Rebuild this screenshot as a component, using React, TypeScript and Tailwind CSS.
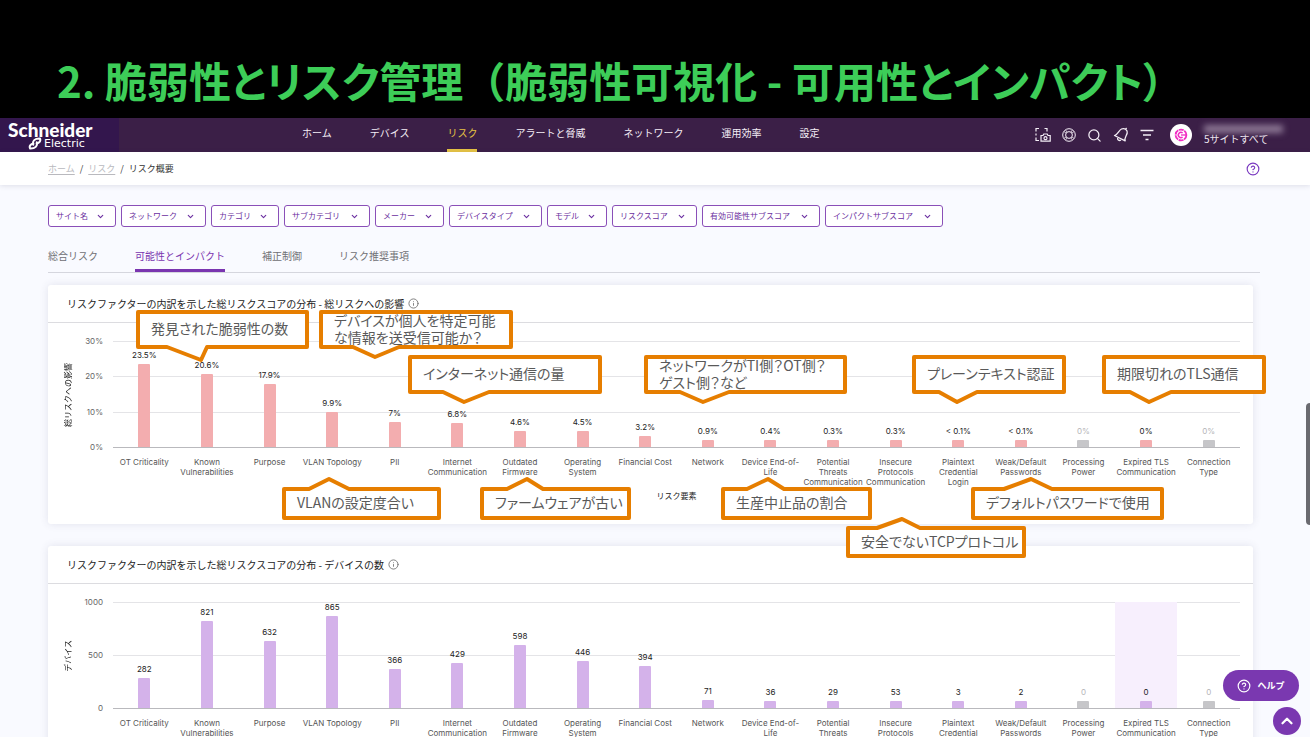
import { ChevronDown, ChevronUp, CircleHelp, Info, Search } from "lucide-react";

interface Factor {
  label: string;
  impact: number;
  impactLabel: string;
  devices: number;
  muted?: boolean;
  highlighted?: boolean;
}

interface CalloutProps {
  lines: string[];
  left: number;
  top: number;
  width: number;
  height: number;
  // tail points, relative to the box
  tail: { from: number; tip: number; to: number; reach: number; up?: boolean };
}

const NAV_ITEMS = ["ホーム", "デバイス", "リスク", "アラートと脅威", "ネットワーク", "運用効率", "設定"];

const FILTERS = [
  { label: "サイト名", width: "w-[68px]" },
  { label: "ネットワーク", width: "w-[85px]" },
  { label: "カテゴリ", width: "w-[68px]" },
  { label: "サブカテゴリ", width: "w-[86px]" },
  { label: "メーカー", width: "w-[69px]" },
  { label: "デバイスタイプ", width: "w-[93px]" },
  { label: "モデル", width: "w-[60px]" },
  { label: "リスクスコア", width: "w-[85px]" },
  { label: "有効可能性サブスコア", width: "w-[118px]" },
  { label: "インパクトサブスコア", width: "w-[118px]" },
];

const TABS = ["総合リスク", "可能性とインパクト", "補正制御", "リスク推奨事項"];

const FACTORS: Factor[] = [
  { label: "OT Criticality", impact: 23.5, impactLabel: "23.5%", devices: 282 },
  { label: "Known\nVulnerabilities", impact: 20.6, impactLabel: "20.6%", devices: 821 },
  { label: "Purpose", impact: 17.9, impactLabel: "17.9%", devices: 632 },
  { label: "VLAN Topology", impact: 9.9, impactLabel: "9.9%", devices: 865 },
  { label: "PII", impact: 7, impactLabel: "7%", devices: 366 },
  { label: "Internet\nCommunication", impact: 6.8, impactLabel: "6.8%", devices: 429 },
  { label: "Outdated\nFirmware", impact: 4.6, impactLabel: "4.6%", devices: 598 },
  { label: "Operating\nSystem", impact: 4.5, impactLabel: "4.5%", devices: 446 },
  { label: "Financial Cost", impact: 3.2, impactLabel: "3.2%", devices: 394 },
  { label: "Network", impact: 0.9, impactLabel: "0.9%", devices: 71 },
  { label: "Device End-of-\nLife", impact: 0.4, impactLabel: "0.4%", devices: 36 },
  { label: "Potential\nThreats\nCommunication", impact: 0.3, impactLabel: "0.3%", devices: 29 },
  { label: "Insecure\nProtocols\nCommunication", impact: 0.3, impactLabel: "0.3%", devices: 53 },
  { label: "Plaintext\nCredential\nLogin", impact: 0.1, impactLabel: "< 0.1%", devices: 3 },
  { label: "Weak/Default\nPasswords", impact: 0.1, impactLabel: "< 0.1%", devices: 2 },
  { label: "Processing\nPower", impact: 0, impactLabel: "0%", devices: 0, muted: true },
  { label: "Expired TLS\nCommunication", impact: 0, impactLabel: "0%", devices: 0, highlighted: true },
  { label: "Connection\nType", impact: 0, impactLabel: "0%", devices: 0, muted: true },
];

const CALLOUTS: CalloutProps[] = [
  { lines: ["発見された脆弱性の数"], left: 138, top: 312, width: 169, height: 35, tail: { from: 29, tip: 63, to: 69, reach: 13 } },
  { lines: ["デバイスが個人を特定可能", "な情報を送受信可能か？"], left: 321, top: 312, width: 190, height: 35, tail: { from: 32, tip: 54, to: 78, reach: 10 } },
  { lines: ["インターネット通信の量"], left: 410, top: 357, width: 190, height: 35, tail: { from: 33, tip: 54, to: 79, reach: 10 } },
  { lines: ["ネットワークがTI側？OT側？", "ゲスト側？など"], left: 646, top: 357, width: 199, height: 35, tail: { from: 34, tip: 57, to: 83, reach: 10 } },
  { lines: ["プレーンテキスト認証"], left: 914, top: 357, width: 150, height: 35, tail: { from: 25, tip: 43, to: 63, reach: 10 } },
  { lines: ["期限切れのTLS通信"], left: 1104, top: 357, width: 160, height: 35, tail: { from: 26, tip: 45, to: 67, reach: 10 } },
  { lines: ["VLANの設定度合い"], left: 284, top: 489, width: 155, height: 29, tail: { from: 25, tip: 45, to: 65, reach: 10, up: true } },
  { lines: ["ファームウェアが古い"], left: 482, top: 489, width: 147, height: 29, tail: { from: 25, tip: 45, to: 61, reach: 10, up: true } },
  { lines: ["生産中止品の割合"], left: 723, top: 489, width: 147, height: 29, tail: { from: 24, tip: 45, to: 61, reach: 10, up: true } },
  { lines: ["デフォルトパスワードで使用"], left: 973, top: 489, width: 189, height: 29, tail: { from: 31, tip: 58, to: 79, reach: 10, up: true } },
  { lines: ["安全でないTCPプロトコル"], left: 848, top: 528, width: 176, height: 28, tail: { from: 29, tip: 54, to: 72, reach: 9, up: true } },
];

function Logo() {
  return (
    <a href="#" aria-label="Schneider Electric" className="flex h-full w-[119px] shrink-0 flex-col bg-[#33164d] pl-2 pt-1 text-white">
      <span className="font-[Lato] text-[19px] font-black leading-[15px]">Schneider</span>
      <span className="flex items-center pl-[20px]">
        <svg viewBox="0 0 14 13" className="h-[13px] w-[14px]" fill="none" stroke="currentColor" strokeLinecap="round">
          <path d="M5.200 7.800C4.200 4.200 6.800 1.200 11.800 1.400 13.200 3.600 11.400 6.200 8.600 6.400" strokeWidth="2" />
          <path d="M8.800 5.200C9.800 8.800 7.200 11.800 2.200 11.600.8 9.400 2.600 6.800 5.400 6.600" strokeWidth="2" />
        </svg>
        <span className="pl-[2px] font-['DejaVu_Sans'] text-[11px] leading-[12px]">Electric</span>
      </span>
    </a>
  );
}

function CaptureIcon() {
  return (
    <svg viewBox="0 0 16 16" className="h-4 w-4" fill="none" stroke="currentColor" strokeWidth="1.2">
      <path d="M1 4.500V1.500H4M9.500 1.500H12V4.500M1 6.500V8.500M1 10.500V13.500H4" />
      <path d="M6 8.500H8L8.800 7H12.200L13 8.500H15.200V14.200H6Z" />
      <circle cx="10.500" cy="11.200" r="1.500" />
    </svg>
  );
}

function BuoyIcon() {
  return (
    <svg viewBox="0 0 14 14" className="h-[14px] w-[14px]" fill="none" stroke="currentColor">
      <circle cx="7" cy="7" r="6.300" />
      <circle cx="7" cy="7" r="3.400" />
      <path d="M2 3.600 4.200 5.200M3.600 2 5.200 4.200M10.400 2 8.800 4.200M12 3.600 9.800 5.200M2 10.400 4.200 8.800M3.600 12 5.200 9.800M10.400 12 8.800 9.800M12 10.400 9.800 8.800" strokeWidth=".8" />
    </svg>
  );
}

function BellIcon() {
  return (
    <svg viewBox="0 0 16 16" className="h-4 w-4" fill="none" stroke="currentColor" strokeWidth="1.300" strokeLinejoin="round">
      <path d="M1.500 8.500C5 7.500 5.500 3.500 8.500 2 10 1.300 11.400 1.500 12.600 2.200 14 3.200 14.500 4.500 14.200 6 13.600 8.800 11.200 10.600 12.200 13.800Z" />
      <path d="M4.600 11C4.400 13 6.200 14.200 8 13M12.600 2.200 13.600 1" />
    </svg>
  );
}

function FilterIcon() {
  return (
    <svg viewBox="0 0 14 12" className="h-3 w-[14px]" fill="none" stroke="currentColor" strokeWidth="1.500">
      <path d="M.5 1.500H13.500M3 6H11M5.500 10.500H8.500" />
    </svg>
  );
}

function Avatar() {
  return (
    <span className="flex h-[22px] w-[22px] items-center justify-center rounded-full bg-white">
      <svg viewBox="0 0 14 14" className="h-[14px] w-[14px]" fill="none" stroke="#f22cc4">
        <circle cx="7" cy="7" r="5.400" strokeWidth="1.800" strokeDasharray="5 .65" />
        <path d="M8.600 4.800A2.700 2.700 0 1 0 8.600 9.200" strokeWidth="1.500" />
        <path d="M7 7H12" strokeWidth="1.300" />
      </svg>
    </span>
  );
}

function TopBar() {
  return (
    <header className="flex h-[34px] shrink-0 items-center bg-[#3b1f47] text-[#f4eef6]">
      <Logo />
      <nav className="flex h-full flex-1 gap-[38px] pl-[183px] text-[10px]">
        {NAV_ITEMS.map((item) => (
          <a
            key={item}
            href="#"
            className={
              item === "リスク"
                ? "flex h-full items-center whitespace-nowrap border-b-[3px] border-[#e6c344] pb-[2px] text-[#e6c344]"
                : "flex h-full items-center whitespace-nowrap border-b-[3px] border-transparent pb-[2px]"
            }
          >
            {item}
          </a>
        ))}
      </nav>
      <div className="flex items-center gap-[11px] pr-[27px]">
        <button type="button" aria-label="キャプチャ"><CaptureIcon /></button>
        <button type="button" aria-label="サポート"><BuoyIcon /></button>
        <button type="button" aria-label="検索"><Search className="h-[15px] w-[15px]" strokeWidth={2} /></button>
        <button type="button" aria-label="通知"><BellIcon /></button>
        <button type="button" aria-label="フィルター"><FilterIcon /></button>
        <button type="button" className="flex items-center gap-3 pl-[5px] text-left">
          <Avatar />
          <span className="flex w-[79px] flex-col pb-[2px] text-[10px] leading-[11px]">
            <span className="h-[8px] w-full bg-[#8d7895] blur-[3px]" />
            <span className="whitespace-nowrap">5サイトすべて</span>
          </span>
        </button>
      </div>
    </header>
  );
}

function Breadcrumb() {
  return (
    <div className="relative z-10 flex h-[33px] shrink-0 items-center justify-between bg-white pl-12 pr-[50px] shadow-[0_1px_5px_rgba(60,60,90,0.14)]">
      <ol className="flex items-center gap-[5px] text-[9px] text-[#333]">
        <li><a href="#" className="text-[#b9b9be] underline underline-offset-2">ホーム</a></li>
        <li aria-hidden="true">/</li>
        <li><a href="#" className="text-[#b9b9be] underline underline-offset-2">リスク</a></li>
        <li aria-hidden="true">/</li>
        <li>リスク概要</li>
      </ol>
      <button type="button" aria-label="ヘルプを表示" className="text-[#7a3ac0]">
        <CircleHelp className="h-[14px] w-[14px]" strokeWidth={2} />
      </button>
    </div>
  );
}

interface BarChartProps {
  title: string;
  axisTitle: string;
  ticks: string[];
  max: number;
  kind: "impact" | "devices";
}

function BarChartCard({ title, axisTitle, ticks, max, kind }: BarChartProps) {
  const barColor = kind === "impact" ? "bg-[#f3adaf]" : "bg-[#d4b2ea]";

  return (
    <section className="rounded-[3px] bg-white shadow-[0_0_8px_rgba(60,60,100,0.12)]">
      <h2 className="flex h-[38px] items-center gap-1 border-b border-[#dcdce0] pl-[19px] text-[10px] text-[#222]">
        {title}
        <Info className="h-[11px] w-[11px] text-[#777]" strokeWidth={2} />
      </h2>
      <div className="flex pl-3 pr-[13px] pt-[18px] font-['Inter','Noto_Sans_CJK_JP',sans-serif] text-[8px] leading-[10px]">
        <div className="flex h-[107px] w-4 items-center justify-center">
          <span className="rotate-180 whitespace-nowrap text-[#222] [text-orientation:sideways] [writing-mode:vertical-rl]">{axisTitle}</span>
        </div>
        <div className="-my-[5px] mr-[10px] flex h-[116px] w-[27px] flex-col justify-between text-right text-[#666]">
          {ticks.map((tick) => (
            <span key={tick}>{tick}</span>
          ))}
        </div>
        <div className="flex-1">
          <div className="relative h-[107px]">
            <div className="absolute inset-0 flex flex-col justify-between">
              {ticks.map((tick, i) => (
                <div key={tick} className={i === ticks.length - 1 ? "h-px bg-[#b9b9bd]" : "h-px bg-[#e4e4e7]"} />
              ))}
            </div>
            <div className="relative grid h-[106px] grid-cols-18">
              {FACTORS.map((factor) => (
                <div
                  key={factor.label}
                  className={
                    factor.highlighted && kind === "devices"
                      ? "flex h-full flex-col items-center justify-end bg-[#f7effd]"
                      : "flex h-full flex-col items-center justify-end"
                  }
                >
                  <span className={factor.muted ? "mb-1 whitespace-nowrap text-[#b5b5b8]" : "mb-1 whitespace-nowrap text-[#222]"}>
                    {kind === "impact" ? factor.impactLabel : factor.devices}
                  </span>
                  <div
                    className={`min-h-[7px] w-3 shrink-0 rounded-t-[1px] ${factor.muted ? "bg-[#c6c6c9]" : barColor}`}
                    style={{ height: `${(factor[kind] / max) * 100}%` }}
                  />
                </div>
              ))}
            </div>
          </div>
          <div className="mt-[9px] grid grid-cols-18 text-center text-[#555]">
            {FACTORS.map((factor) => (
              <span key={factor.label} className="whitespace-pre">{factor.label}</span>
            ))}
          </div>
          <p className="mt-1 pb-[23px] text-center text-[#222]">リスク要素</p>
        </div>
      </div>
    </section>
  );
}

function Callout({ lines, left, top, width, height, tail }: CalloutProps) {
  const edge = tail.up
    ? `0,0 ${tail.from},0 ${tail.tip},${-tail.reach} ${tail.to},0 ${width},0 ${width},${height} 0,${height}`
    : `0,0 ${width},0 ${width},${height} ${tail.to},${height} ${tail.tip},${height + tail.reach} ${tail.from},${height} 0,${height}`;

  return (
    <div className="absolute z-20 flex items-center" style={{ left, top, width, height }}>
      <svg className="absolute inset-0 h-full w-full overflow-visible" fill="white" stroke="#e67e00" strokeWidth="4" strokeLinejoin="round">
        <polygon points={edge} />
      </svg>
      <p className="relative whitespace-nowrap pb-[2px] pl-[13px] text-[14px] leading-[17px] text-[#595959] [font-feature-settings:'palt']">
        {lines.map((line) => (
          <span key={line} className="block">{line}</span>
        ))}
      </p>
    </div>
  );
}

export default function App() {
  return (
    <div lang="ja" className="relative flex h-screen flex-col overflow-hidden bg-[#f9faff] font-['Noto_Sans_CJK_JP',sans-serif]">
      {/* Slide heading */}
      <div className="flex h-[118px] shrink-0 items-end bg-black pb-2 pl-[57px]">
        <h1 className="whitespace-nowrap text-[42px] font-bold leading-[60px] text-[#3dcd58] [font-feature-settings:'palt']">
          2. 脆弱性とリスク管理<span className="[font-feature-settings:normal]">（</span>脆弱性可視化 - 可用性とインパクト）
        </h1>
      </div>

      <TopBar />
      <Breadcrumb />

      <main className="min-h-0 flex-1 overflow-hidden pl-12 pr-[50px] pt-5">
        <div className="flex gap-[5px]">
          {FILTERS.map((filter) => (
            <button
              key={filter.label}
              type="button"
              className={`flex h-[22px] items-center justify-between whitespace-nowrap rounded-[3px] border border-[#8a4fb8] bg-white pl-[7px] pr-[10px] text-[8px] text-[#6b2fa0] ${filter.width}`}
            >
              {filter.label}
              <ChevronDown className="h-[9px] w-[9px]" strokeWidth={3} />
            </button>
          ))}
        </div>

        <div role="tablist" className="mt-5 flex gap-[37px] border-b border-[#d5d6de] text-[10px] leading-[18px] text-[#707075]">
          {TABS.map((tab, i) => (
            <button
              key={tab}
              type="button"
              role="tab"
              aria-selected={i === 1}
              className={i === 1 ? "border-b-[3px] border-[#7a35b0] pb-1 text-[#7a35b0]" : "border-b-[3px] border-transparent pb-1"}
            >
              {tab}
            </button>
          ))}
        </div>

        <div className="mr-[7px] mt-3 flex flex-col gap-[22px]">
          <BarChartCard
            title="リスクファクターの内訳を示した総リスクスコアの分布 - 総リスクへの影響"
            axisTitle="総リスクへの影響"
            ticks={["30%", "20%", "10%", "0%"]}
            max={30}
            kind="impact"
          />
          <BarChartCard
            title="リスクファクターの内訳を示した総リスクスコアの分布 - デバイスの数"
            axisTitle="デバイス"
            ticks={["1000", "500", "0"]}
            max={1000}
            kind="devices"
          />
        </div>
      </main>

      {CALLOUTS.map((callout) => (
        <Callout key={callout.lines[0]} {...callout} />
      ))}

      {/* Scroll thumb and floating actions */}
      <div className="absolute right-0 top-[403px] h-[122px] w-1 rounded-l-sm bg-[#6a6a70]" />
      <button type="button" className="absolute bottom-9 right-[11px] flex h-[31px] w-[76px] items-center justify-center gap-[6px] rounded-full bg-[#7a38b0] text-[9px] font-bold text-white">
        <CircleHelp className="h-[14px] w-[14px]" strokeWidth={2} />
        ヘルプ
      </button>
      <button type="button" aria-label="トップへ戻る" className="absolute bottom-[2px] right-[9px] flex h-7 w-7 items-center justify-center rounded-full bg-[#7a38b0] text-white">
        <ChevronUp className="h-[18px] w-[18px]" strokeWidth={3} />
      </button>
    </div>
  );
}
